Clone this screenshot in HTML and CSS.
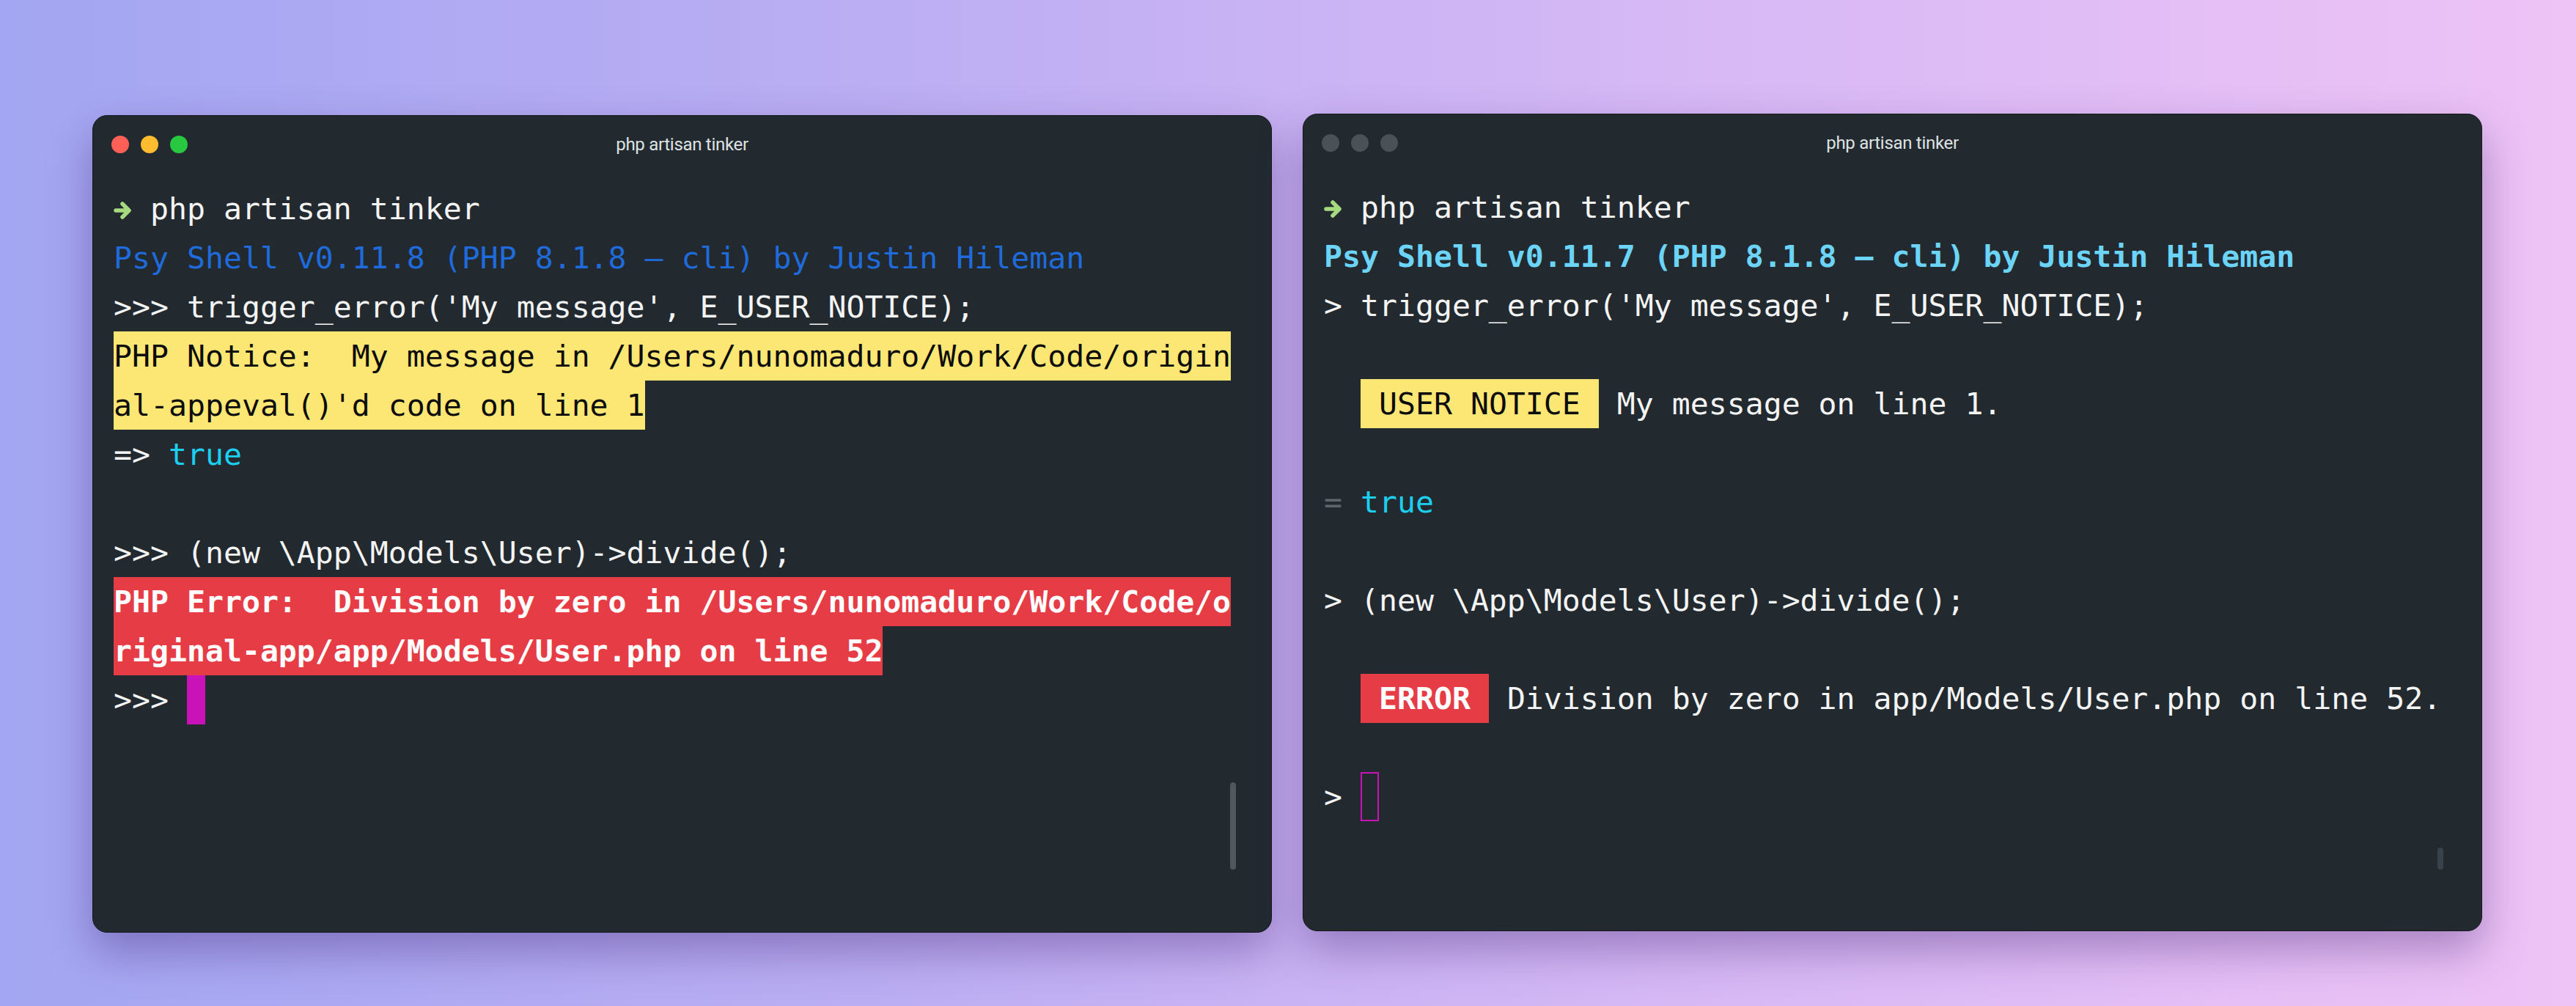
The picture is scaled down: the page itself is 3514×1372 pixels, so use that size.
FILE: index.html
```html
<!DOCTYPE html>
<html lang="en">
<head>
    <meta charset="UTF-8">
    <meta name="viewport" content="width=device-width, initial-scale=1.0">
    <title>Tinker: before and after</title>
    <link rel="stylesheet" href="styles.css">
</head>
<body>
    <main class="stage">
        <!-- old tinker output -->
        <section class="term">
            <header class="term-bar">
                <div class="lights">
                    <span class="light red"></span>
                    <span class="light yellow"></span>
                    <span class="light green"></span>
                </div>
                <div class="term-title">php artisan tinker</div>
            </header>
            <div class="term-body">
                <div class="line"><svg class="arrow" viewBox="0 0 25 28"><path d="M3 14 H20 M12 5 L21 14 L12 23"/></svg> php artisan tinker</div>
                <div class="line blue">Psy Shell v0.11.8 (PHP 8.1.8 – cli) by Justin Hileman</div>
                <div class="line">&gt;&gt;&gt; trigger_error('My message', E_USER_NOTICE);</div>
                <div class="line notice">PHP Notice:  My message in /Users/nunomaduro/Work/Code/origin</div>
                <div class="line notice">al-appeval()'d code on line 1</div>
                <div class="line">=&gt; <span class="cyan">true</span></div>
                <div class="line"> </div>
                <div class="line">&gt;&gt;&gt; (new \App\Models\User)-&gt;divide();</div>
                <div class="line error">PHP Error:  Division by zero in /Users/nunomaduro/Work/Code/o</div>
                <div class="line error">riginal-app/app/Models/User.php on line 52</div>
                <div class="line">&gt;&gt;&gt; <span class="cursor"></span></div>
            </div>
            <div class="scroll-thumb tall"></div>
        </section>

        <!-- new tinker output -->
        <section class="term raised">
            <header class="term-bar">
                <div class="lights">
                    <span class="light idle"></span>
                    <span class="light idle"></span>
                    <span class="light idle"></span>
                </div>
                <div class="term-title">php artisan tinker</div>
            </header>
            <div class="term-body">
                <div class="line"><svg class="arrow" viewBox="0 0 25 28"><path d="M3 14 H20 M12 5 L21 14 L12 23"/></svg> php artisan tinker</div>
                <div class="line sky">Psy Shell v0.11.7 (PHP 8.1.8 – cli) by Justin Hileman</div>
                <div class="line">&gt; trigger_error('My message', E_USER_NOTICE);</div>
                <div class="line"> </div>
                <div class="line">  <span class="badge badge-notice"> USER NOTICE </span> My message on line 1.</div>
                <div class="line"> </div>
                <div class="line"><span class="muted">=</span> <span class="cyan">true</span></div>
                <div class="line"> </div>
                <div class="line">&gt; (new \App\Models\User)-&gt;divide();</div>
                <div class="line"> </div>
                <div class="line">  <span class="badge badge-error"> ERROR </span> Division by zero in app/Models/User.php on line 52.</div>
                <div class="line"> </div>
                <div class="line">&gt; <span class="cursor hollow"></span></div>
            </div>
            <div class="scroll-thumb short"></div>
        </section>
    </main>
</body>
</html>
```

FILE: styles.css
```css
* {
    margin: 0;
    padding: 0;
    box-sizing: border-box;
}
html, body {
    height: 100%;
}
body {
    background: linear-gradient(90deg, #a3a6f2 0%, #bcaef3 35%, #d6b8f5 65%, #eec3f6 100%);
    font-family: "DejaVu Sans Mono", "Liberation Mono", monospace;
    color: #f4f4f4;
    overflow: hidden;
}
.stage {
    display: flex;
    align-items: flex-start;
    gap: 42px;
    padding: 157px 0 0 126px;
}
.term {
    position: relative;
    width: 1609px;
    height: 1115px;
    background-color: #222a30;
    border: 1px solid #15191c;
    border-radius: 20px;
    box-shadow: 0 26px 60px rgba(60, 30, 110, 0.38);
    overflow: hidden;
}
.term.raised {
    margin-top: -2px;
}
.term-bar {
    display: grid;
    grid-template-columns: 1fr auto 1fr;
    align-items: center;
    height: 78px;
    padding: 0 25px;
}
.lights {
    display: flex;
    gap: 16px;
}
.light {
    width: 24px;
    height: 24px;
    border-radius: 50%;
}
.light.red { background-color: #fe5f57; }
.light.yellow { background-color: #febc2e; }
.light.green { background-color: #28c840; }
.light.idle { background-color: #4a5157; }
.term-title {
    font-family: Roboto, "Liberation Sans", sans-serif;
    font-size: 24px;
    color: #dfe1e3;
    letter-spacing: -0.3px;
}
.term-body {
    padding: 15px 28px 0;
    font-size: 41.5px;
}
.line {
    height: 67px;
    line-height: 67px;
    white-space: pre;
}
.arrow {
    display: inline-block;
    width: 25px;
    height: 28px;
    vertical-align: -2px;
    fill: none;
    stroke: #a6da7e;
    stroke-width: 5.5;
    stroke-linecap: round;
    stroke-linejoin: round;
}
.blue { color: #1f6bdb; }
.sky { color: #6cd4f6; font-weight: bold; }
.cyan { color: #1ccfee; }
.muted { color: #5e666b; }
.notice {
    width: fit-content;
    background-color: #fde774;
    color: #0c0c0c;
}
.error {
    width: fit-content;
    background-color: #e53c46;
    color: #ffffff;
    font-weight: bold;
}
.badge {
    display: inline-block;
    height: 67px;
    vertical-align: top;
}
.badge-notice {
    background-color: #fde774;
    color: #0c0c0c;
}
.badge-error {
    background-color: #e53c46;
    color: #ffffff;
    font-weight: bold;
}
.cursor {
    display: inline-block;
    width: 25px;
    height: 67px;
    vertical-align: top;
    background-color: #c913b9;
}
.cursor.hollow {
    background-color: transparent;
    border: 2px solid #c913b9;
}
.scroll-thumb {
    position: absolute;
    right: 48px;
    width: 8px;
    border-radius: 4px;
}
.scroll-thumb.tall {
    top: 909px;
    height: 119px;
    background-color: #50585d;
}
.scroll-thumb.short {
    top: 1000px;
    height: 30px;
    right: 52px;
    background-color: #37424a;
}
```
